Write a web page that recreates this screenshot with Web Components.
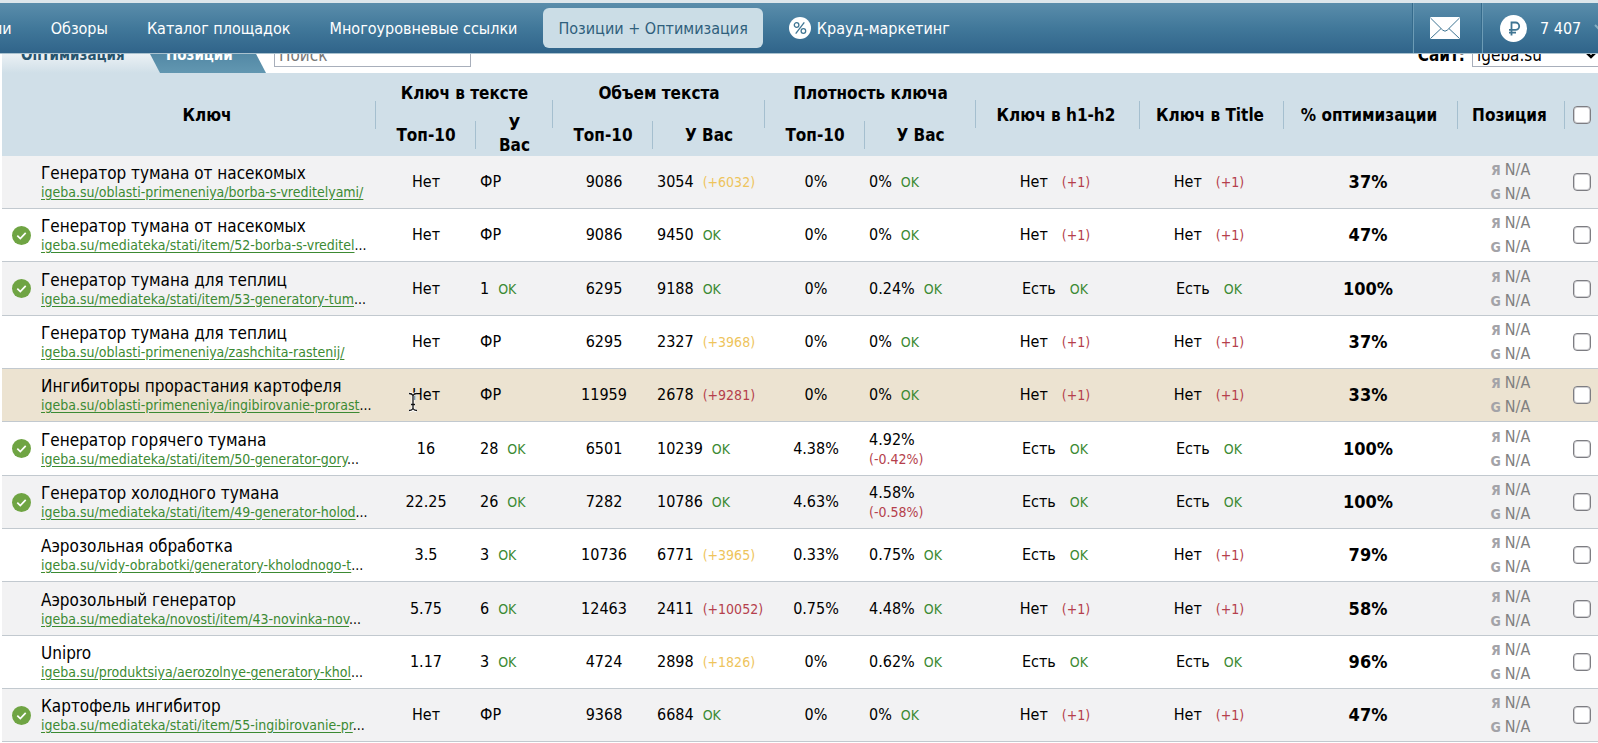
<!DOCTYPE html>
<html lang="ru">
<head>
<meta charset="utf-8">
<title>Позиции + Оптимизация</title>
<style>
  html, body { margin: 0; }
  body {
    background: #fff;
    color: #000;
    font: 16px/20px "DejaVu Sans Condensed", "DejaVu Sans", sans-serif;
    overflow-x: clip;
  }
  main { padding-left: 2px; }
</style>
</head>
<body>
<top-bar>
  <nav-item>ии</nav-item>
  <nav-item>Обзоры</nav-item>
  <nav-item>Каталог площадок</nav-item>
  <nav-item>Многоуровневые ссылки</nav-item>
  <nav-item active>Позиции + Оптимизация</nav-item>
  <nav-item>
    <svg slot="icon" width="22" height="22" viewBox="0 0 22 22" aria-hidden="true"><circle cx="11" cy="11" r="11" fill="#fff"/><g fill="none" stroke="#3f7593" stroke-width="1.3"><circle cx="7.6" cy="8" r="2.3"/><circle cx="14.4" cy="14" r="2.3"/><path d="M15.3 5.4 6.7 16.6"/></g></svg>
    Крауд-маркетинг
  </nav-item>
  <account-box slot="side">7 407</account-box>
</top-bar>
<main>
  <filter-bar></filter-bar>
  <keyword-table></keyword-table>
</main>
<text-cursor></text-cursor>

<script>
const define = (name, html, setup) => {
  const tpl = document.createElement('template');
  tpl.innerHTML = html;
  customElements.define(name, class extends HTMLElement {
    constructor() {
      super();
      this.attachShadow({ mode: 'open' }).append(tpl.content.cloneNode(true));
    }
    connectedCallback() { if (setup) setup(this, this.shadowRoot); }
  });
};

define('top-bar', `
<style>
  :host { display: block; position: relative; z-index: 2; border-top: 3px solid #dde6eb; }
  header {
    display: flex; justify-content: space-between; height: 51px; overflow: hidden;
    background: linear-gradient(#5a8dab, #41789a 50%, #30648a);
    border-bottom: 1px solid #a9c2cf; box-sizing: border-box;
  }
  nav { display: flex; align-items: center; gap: 13px; margin-left: -20px; }
</style>
<header><nav><slot></slot></nav><slot name="side"></slot></header>`);

define('nav-item', `
<style>
  :host { display: block; }
  a {
    display: flex; align-items: center; gap: 6px; height: 40px; padding: 0 13px;
    color: #fff; text-decoration: none; white-space: nowrap; border-radius: 6px;
  }
  span { padding-top: 2px; }
  :host([active]) a { background: #cbdde6; color: #2f5f7c; padding: 0 15px; }
</style>
<a href="#"><slot name="icon"></slot><span><slot></slot></span></a>`);

define('account-box', `
<style>
  :host { display: flex; color: #fff; }
  a { display: flex; align-items: center; color: inherit; text-decoration: none; box-sizing: border-box;
      border-left: 1px solid #6d9cb6; box-shadow: -1px 0 #356b8c; }
  .mail { width: 69px; padding-right: 6px; justify-content: center; }
  .money { width: 116px; padding-left: 17px; gap: 13px; white-space: nowrap; overflow: hidden; }
  span { padding-top: 2px; }
  svg { flex: none; }
</style>
<a class="mail" href="#" aria-label="Сообщения">
  <svg width="30" height="22" viewBox="0 0 30 22"><rect width="30" height="22" rx="1" fill="#fff"/><g fill="none" stroke="#3f7593" stroke-width="1"><path d="M.5 1 12.8 13.2q2.2 2 4.4 0L29.5 1M.5 21.5 11 11.6M29.5 21.5 19 11.6"/></g></svg>
</a>
<a class="money" href="#">
  <svg width="27" height="27" viewBox="0 0 27 27" aria-hidden="true"><circle cx="13.500" cy="13.500" r="13.500" fill="#fff"/><path d="M11.500 20.500V7.500H15.500a3.700 3.700 0 0 1 0 7.400H9M9 17.700H16" fill="none" stroke="#3f7593" stroke-width="1.800"/></svg>
  <span><slot></slot></span>
  <svg width="12" height="8" viewBox="0 0 12 8" aria-hidden="true"><path d="M1 1 6 6 11 1" fill="none" stroke="#84adc2" stroke-width="2"/></svg>
</a>`);

define('filter-bar', `
<style>
  :host { display: flex; align-items: flex-start; height: 42px; margin-top: -23px; font-size: 17px; }
  .tabs { display: flex; height: 42px; }
  .tabs a { display: flex; align-items: center; font-weight: bold; font-size: 15px;
            text-decoration: none; box-sizing: border-box; padding-top: 6px; }
  .tabs .on { width: 158px; padding-left: 19px; color: #26536d; position: relative; z-index: 1;
        background: linear-gradient(#f4f7f9 40%, #d0dfe8);
        clip-path: polygon(0 0, 136px 0, 100% 100%, 0 100%); }
  .tabs .off { width: 134px; margin-left: -28px; padding-left: 34px; color: #fff;
         background: linear-gradient(#417797, #6297b1);
         clip-path: polygon(0 0, 112px 0, 100% 100%, 0 100%); }
  .search { width: 197px; height: 36px; margin-left: 8px; padding: 12px 4px 0;
            font: inherit; border: 1px solid #a8afbb; box-sizing: border-box; outline: none; }
  .search::placeholder { color: #777; opacity: 1; }
  label { margin-left: auto; font-weight: bold; display: flex; gap: 7px; line-height: 49px; white-space: nowrap; }
  .pick { display: grid; grid-template-columns: 100%; width: 126px; }
  .pick > * { grid-area: 1 / 1; }
  select { width: 140px; height: 36px; padding: 12px 4px 0; font: 17px "DejaVu Sans Condensed", sans-serif;
           color: #000; background: none; border: 1px solid #a8afbb; border-radius: 0; box-sizing: border-box; appearance: none; }
  .pick svg { justify-self: end; margin: 20px 1px 0 0; pointer-events: none; }
</style>
<div class="tabs"><a class="on" href="#">Оптимизация</a><a class="off" href="#">Позиции</a></div>
<input class="search" type="text" placeholder="Поиск" aria-label="Поиск">
<label>Сайт:
  <span class="pick"><select><option>igeba.su</option></select><svg width="12" height="8" viewBox="0 0 12 8" aria-hidden="true"><path d="M1 1 6 6 11 1" fill="none" stroke="#000" stroke-width="2.500"/></svg></span>
</label>`);

/* Result beside a value: OK, a small shortfall or a large one. */
define('value-mark', `
<style>
  :host { font-size: 14px; margin-left: 5px; color: #b53f4c; }
  :host([kind=ok]) { color: #3c8a33; }
  :host([kind=warn]) { color: #eec45c; }
  :host([wide]) { margin-left: 10px; }
  :host([below]) { display: block; margin-left: 0; line-height: 18px; }
</style><slot></slot>`);

define('done-mark', `
<style>:host { display: block; width: 19px; height: 19px; } svg { display: block; }</style>
<svg width="19" height="19" viewBox="0 0 19 19" role="img" aria-label="Готово"><circle cx="9.500" cy="9.500" r="9.500" fill="#6fa443"/><path d="M5.300 9.700 8.300 12.600 13.700 6.900" fill="none" stroke="#fff" stroke-width="1.700"/></svg>`);

define('search-position', `
<style>
  :host { display: block; line-height: 24px; color: #808080; white-space: nowrap; }
  div { display: flex; justify-content: center; gap: 4px; }
  b { width: 11px; text-align: right; font-size: 14px; color: #a3a3a8; }
</style>
<div><b>Я</b>N/A</div><div><b>G</b>N/A</div>`);

define('check-box', `
<style>
  :host { display: block; width: 18px; height: 18px; }
  input { display: block; appearance: none; width: 18px; height: 18px; margin: 0; box-sizing: border-box;
          background: #fff; border: 1px solid #7d7d82; box-shadow: inset 0 0 0 1px #d0d0d3; border-radius: 4px; }
  input:checked { background: #41789a; }
</style><input type="checkbox">`, (host, root) => {
  root.querySelector('input').setAttribute('aria-label', host.getAttribute('label') || 'Выбрать');
});

define('text-cursor', `
<style>:host { position: absolute; left: 407px; top: 392px; z-index: 3; pointer-events: none; } svg { display: block; }</style>
<svg width="12" height="20" viewBox="0 0 12 20" aria-hidden="true"><path d="M2 1.500Q5 1.500 6 3.500 7 1.500 10 1.500M6 3.500V16.500M2 18.500Q5 18.500 6 16.500 7 18.500 10 18.500M4 12.500H8" fill="none" stroke="#fff" stroke-width="3"/><path d="M2 1.500Q5 1.500 6 3.500 7 1.500 10 1.500M6 3.500V16.500M2 18.500Q5 18.500 6 16.500 7 18.500 10 18.500M4 12.500H8" fill="none" stroke="#111" stroke-width="1.300"/></svg>`);

const rows = [
  // done, keyword, url, cut, top, own, volume top, volume own, density top, density own, h1, title, percent
  [0, 'Генератор тумана от насекомых', 'igeba.su/oblasti-primeneniya/borba-s-vreditelyami/', 0, 'Нет', 'ФР', '9086', '3054 w(+6032)', '0%', '0% OK', 0, 0, '37%'],
  [1, 'Генератор тумана от насекомых', 'igeba.su/mediateka/stati/item/52-borba-s-vreditel', 1, 'Нет', 'ФР', '9086', '9450 OK', '0%', '0% OK', 0, 0, '47%'],
  [1, 'Генератор тумана для теплиц', 'igeba.su/mediateka/stati/item/53-generatory-tum', 1, 'Нет', '1 OK', '6295', '9188 OK', '0%', '0.24% OK', 1, 1, '100%'],
  [0, 'Генератор тумана для теплиц', 'igeba.su/oblasti-primeneniya/zashchita-rastenij/', 0, 'Нет', 'ФР', '6295', '2327 w(+3968)', '0%', '0% OK', 0, 0, '37%'],
  [0, 'Ингибиторы прорастания картофеля', 'igeba.su/oblasti-primeneniya/ingibirovanie-prorast', 1, 'Нет', 'ФР', '11959', '2678 (+9281)', '0%', '0% OK', 0, 0, '33%'],
  [1, 'Генератор горячего тумана', 'igeba.su/mediateka/stati/item/50-generator-gory', 1, '16', '28 OK', '6501', '10239 OK', '4.38%', '4.92% b(-0.42%)', 1, 1, '100%'],
  [1, 'Генератор холодного тумана', 'igeba.su/mediateka/stati/item/49-generator-holod', 1, '22.25', '26 OK', '7282', '10786 OK', '4.63%', '4.58% b(-0.58%)', 1, 1, '100%'],
  [0, 'Аэрозольная обработка', 'igeba.su/vidy-obrabotki/generatory-kholodnogo-t', 1, '3.5', '3 OK', '10736', '6771 w(+3965)', '0.33%', '0.75% OK', 1, 0, '79%'],
  [0, 'Аэрозольный генератор', 'igeba.su/mediateka/novosti/item/43-novinka-nov', 1, '5.75', '6 OK', '12463', '2411 (+10052)', '0.75%', '4.48% OK', 0, 0, '58%'],
  [0, 'Unipro', 'igeba.su/produktsiya/aerozolnye-generatory-khol', 1, '1.17', '3 OK', '4724', '2898 w(+1826)', '0%', '0.62% OK', 1, 1, '96%'],
  [1, 'Картофель ингибитор', 'igeba.su/mediateka/stati/item/55-ingibirovanie-pr', 1, 'Нет', 'ФР', '9368', '6684 OK', '0%', '0% OK', 0, 0, '47%'],
];

const value = text => {
  const [main, mark] = text.split(' ');
  if (!mark) return main;
  if (mark === 'OK') return `${main}<value-mark kind="ok">OK</value-mark>`;
  if (mark[0] === 'w') return `${main}<value-mark kind="warn">${mark.slice(1)}</value-mark>`;
  if (mark[0] === 'b') return `${main}<value-mark below>${mark.slice(1)}</value-mark>`;
  return `${main}<value-mark>${mark}</value-mark>`;
};
const present = yes => yes ? 'Есть<value-mark wide kind="ok">OK</value-mark>' : 'Нет<value-mark wide>(+1)</value-mark>';

const rowHtml = ([done, key, url, cut, top, own, vTop, vOwn, dTop, dOwn, h1, title, pct]) => `
<tr>
  <td class="mark">${done ? '<done-mark></done-mark>' : ''}</td>
  <td class="key"><div class="name">${key}</div><div class="url"><a href="#">${url}</a>${cut ? '...' : ''}</div></td>
  <td>${top}</td><td class="own">${value(own)}</td>
  <td class="vol">${vTop}</td><td class="own">${value(vOwn)}</td>
  <td class="vol">${dTop}</td><td class="own">${value(dOwn)}</td>
  <td class="flag">${present(h1)}</td><td class="flag">${present(title)}</td>
  <td class="pct">${pct}</td><td class="pos"><search-position></search-position></td>
  <td class="pick"><check-box label="Выбрать: ${key}"></check-box></td>
</tr>`;

define('keyword-table', `
<style>
  :host { display: block; }
  table { width: 100%; table-layout: fixed; border-collapse: separate; border-spacing: 0; }
  th, td { padding: 0; text-align: center; white-space: nowrap; vertical-align: middle; }
  thead { background: #d0dfe8; }
  th { font-size: 17px; line-height: 21px; background: linear-gradient(#a5bfcf, #a5bfcf) no-repeat right center / 1px 28px; }
  .tall { padding-top: 2px; padding-right: 4px; }
  .title { padding-top: 2px; padding-left: 36px; }
  .group { height: 41px; background-size: 1px 14px; background-position: right bottom; }
  .sub { height: 42px; }
  .end { background-size: 1px 14px; background-position: right top; }
  th.pick { background: none; }
  td { height: 52px; border-bottom: 1px solid #c2c9cf; }
  tr:nth-child(3n) td { height: 53px; }
  tbody tr:nth-child(odd) { background: #f2f2f3; }
  tbody tr:nth-child(5) { background: #ece3d1; }
  .mark done-mark { margin: 0 0 0 10px; }
  .key { text-align: left; }
  .name { font-size: 17px; line-height: 20px; }
  .url { font-size: 14px; line-height: 18px; }
  .url a { color: #3c8a33; text-decoration: underline; text-underline-offset: 2px; }
  td.own { text-align: left; padding-left: 4px; }
  td.vol { padding-left: 2px; }
  td.flag { padding-right: 6px; }
  td.pct { font-size: 18px; font-weight: bold; padding-right: 6px; }
  td.pos { padding-right: 3px; }
  .pick check-box { margin-left: 8px; }
</style>
<table>
  <colgroup>
    <col style="width:39px"><col><col style="width:100px"><col style="width:77px">
    <col style="width:100px"><col style="width:112px"><col style="width:100px"><col style="width:111px">
    <col style="width:164px"><col style="width:144px"><col style="width:174px"><col style="width:107px"><col style="width:33px">
  </colgroup>
  <thead>
    <tr>
      <th colspan="2" rowspan="2" class="title">Ключ</th>
      <th class="group" colspan="2">Ключ в тексте</th>
      <th class="group" colspan="2">Объем текста</th>
      <th class="group" colspan="2">Плотность ключа</th>
      <th class="tall" rowspan="2">Ключ в h1-h2</th><th class="tall" rowspan="2">Ключ в Title</th>
      <th class="tall" rowspan="2">% оптимизации</th><th class="tall" rowspan="2">Позиция</th>
      <th rowspan="2" class="pick"><check-box label="Выбрать все"></check-box></th>
    </tr>
    <tr>
      <th class="sub">Топ-10</th><th class="sub end">У<br>Вас</th>
      <th class="sub">Топ-10</th><th class="sub end">У Вас</th>
      <th class="sub">Топ-10</th><th class="sub end">У Вас</th>
    </tr>
  </thead>
  <tbody>${rows.map(rowHtml).join('')}</tbody>
</table>`);
</script>
</body>
</html>
